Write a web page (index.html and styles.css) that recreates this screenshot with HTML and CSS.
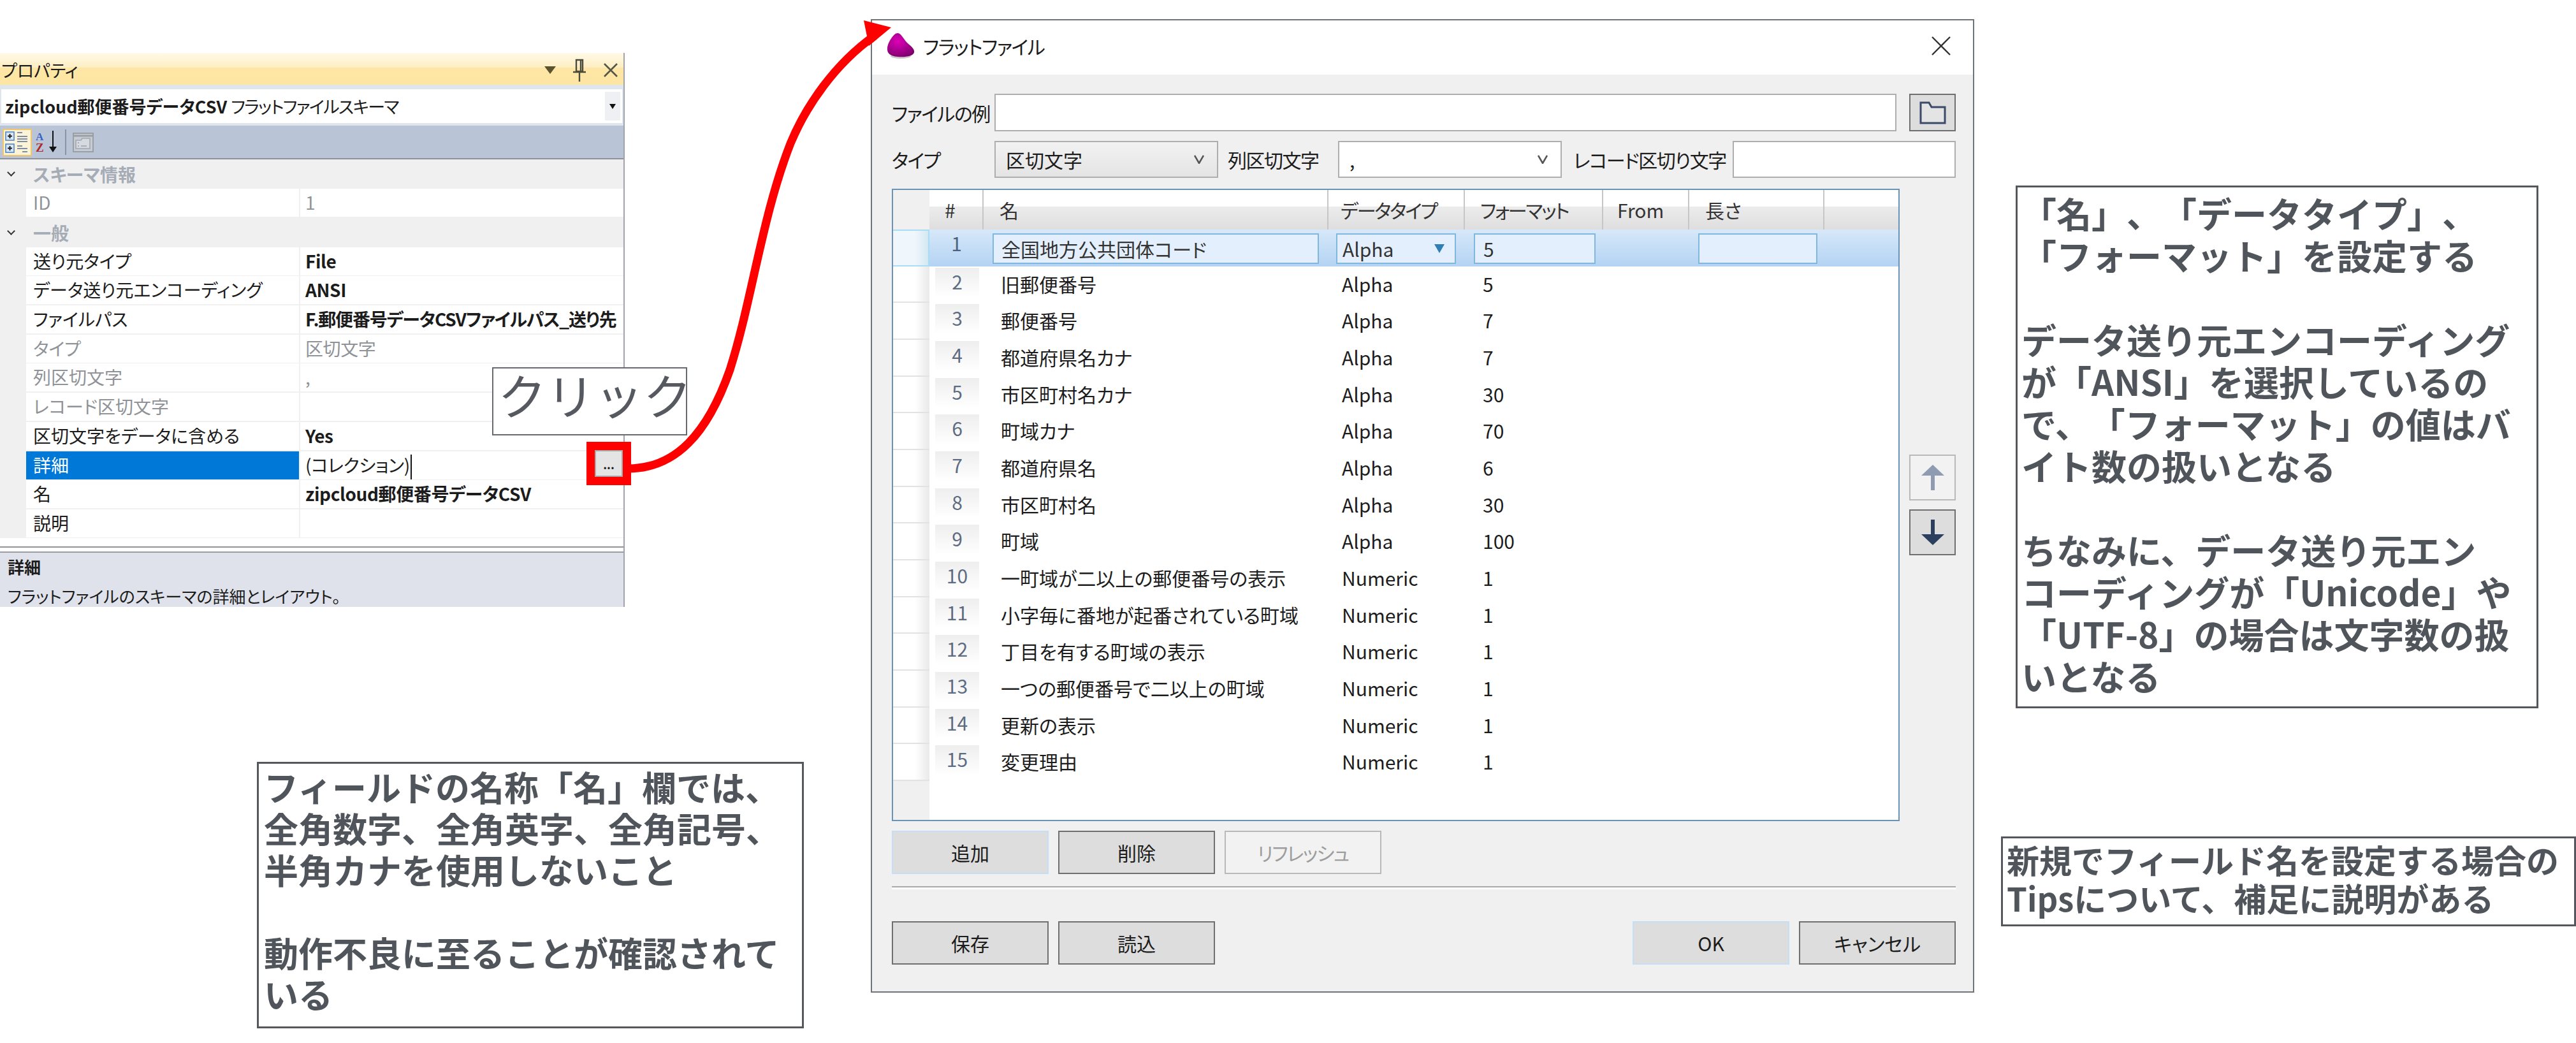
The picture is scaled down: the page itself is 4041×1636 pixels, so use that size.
FILE: index.html
```html
<!DOCTYPE html>
<html lang="ja">
<head>
  <meta charset="UTF-8">
  <title>フラットファイル</title>
  <link rel="stylesheet" href="styles.css">
</head>
<body>
  <div class="sheet">

    <!-- properties pane -->
    <section class="props">
      <div class="props-title">
        <span>プロパティ</span>
        <span class="props-tools">
          <svg width="18" height="12" viewBox="0 0 18 12"><path d="M0 0H18L9 12Z" fill="#5b5330"/></svg>
          <svg width="22" height="36" viewBox="0 0 22 36"><path d="M6 2H16V20H6ZM1 21H21M11 21V36M13 3V20" fill="none" stroke="#4b4b3c" stroke-width="2.4"/></svg>
          <svg width="24" height="24" viewBox="0 0 24 24"><path d="M2 2L22 22M22 2L2 22" stroke="#55564a" stroke-width="2.6"/></svg>
        </span>
      </div>
      <div class="props-combo">
        <div class="props-combo-box">
          <span><b>zipcloud郵便番号データCSV</b> <span class="combo-kind">フラットファイルスキーマ</span></span>
          <span class="props-combo-arrow"><svg width="10" height="8" viewBox="0 0 10 8"><path d="M0 0H10L5 8Z" fill="#111"/></svg></span>
        </div>
      </div>
      <div class="props-bar">
        <span class="bar-active">
          <svg width="40" height="38" viewBox="0 0 40 38">
            <rect x="2" y="3" width="13" height="13" fill="#dbe8fa" stroke="#4e86c8" stroke-width="1.6"/>
            <rect x="2" y="22" width="13" height="13" fill="#dbe8fa" stroke="#4e86c8" stroke-width="1.6"/>
            <path d="M5 9.5H12M8.5 6V13M5 28.5H12M8.5 25V32" stroke="#1c1c1c" stroke-width="2"/>
            <path d="M20 4H28M20 10H36M20 14H36M20 18H36M20 25H28M20 29H36M28 34H36" stroke="#7d8fa8" stroke-width="2"/>
          </svg>
        </span>
        <span class="bar-sort">
          <svg width="36" height="36" viewBox="0 0 36 36">
            <text x="0" y="15" class="sort-a">A</text>
            <text x="0" y="33" class="sort-z">Z</text>
            <path d="M27 0V30" stroke="#111" stroke-width="2"/>
            <path d="M21 25H33L27 34Z" fill="#111"/>
          </svg>
        </span>
        <span class="bar-sep"></span>
        <svg width="33" height="31" viewBox="0 0 33 31">
          <rect x="1" y="1" width="31" height="29" fill="#c6ccd4" stroke="#9a9fa6" stroke-width="2"/>
          <path d="M1 5H32" stroke="#9a9fa6" stroke-width="3"/>
          <path d="M5 12H13L15 9H27V25H5Z" fill="#d6dae0" stroke="#a2a7ae" stroke-width="1.6"/>
          <path d="M8 16H10M8 21H10M13 21H22" stroke="#9a9fa6" stroke-width="1.6"/>
        </svg>
      </div>
      <div class="props-grid">
        <div class="cat"><i></i>スキーマ情報</div>
        <div class="prow off"><span>ID</span><span>1</span></div>
        <div class="cat"><i></i>一般</div>
        <div class="prow"><span>送り元タイプ</span><b>File</b></div>
        <div class="prow"><span>データ送り元エンコーディング</span><b>ANSI</b></div>
        <div class="prow"><span>ファイルパス</span><b class="path-value">F.郵便番号データCSVファイルパス_送り先</b></div>
        <div class="prow off"><span>タイプ</span><span>区切文字</span></div>
        <div class="prow off"><span>列区切文字</span><span>,</span></div>
        <div class="prow off"><span>レコード区切文字</span><span></span></div>
        <div class="prow"><span>区切文字をデータに含める</span><b>Yes</b></div>
        <div class="prow selected"><span>詳細</span><span class="caret-cell">(コレクション)</span></div>
        <div class="prow"><span>名</span><b>zipcloud郵便番号データCSV</b></div>
        <div class="prow"><span>説明</span><span></span></div>
      </div>
      <div class="props-help">
        <b>詳細</b>
        <span>フラットファイルのスキーマの詳細とレイアウト。</span>
      </div>
    </section>

    <div class="click-note">クリック</div>
    <div class="ellipsis-mark"><span class="ellipsis-btn">...</span></div>

    <!-- flat file dialog -->
    <section class="dialog">
      <header class="dlg-head">
        <span class="dlg-title">
          <svg width="46" height="42" viewBox="0 0 46 42">
            <defs>
              <radialGradient id="drop" cx="0.4" cy="0.35" r="0.75">
                <stop offset="0" stop-color="#dd00b8"/>
                <stop offset="1" stop-color="#780068"/>
              </radialGradient>
            </defs>
            <ellipse cx="23" cy="37" rx="16" ry="4" fill="#c9c9c9"/>
            <path d="M18 1C23 1 27 9 32 15C38 21 45 25 44 31C43 37 31 39 18 38C6 37 1 32 2 24C3 15 12 1 18 1Z" fill="url(#drop)"/>
          </svg>
          フラットファイル
        </span>
        <svg class="dlg-close" width="30" height="30" viewBox="0 0 30 30"><path d="M1 1L29 29M29 1L1 29" stroke="#333" stroke-width="2.4"/></svg>
      </header>

      <div class="dlg-body">
        <div class="form-row file-row">
          <label class="lbl-first">ファイルの例</label>
          <div class="input grow"></div>
          <button class="btn folder-btn">
            <svg width="42" height="36" viewBox="0 0 42 36"><path d="M2 34V2H15L19 9H40V34Z" fill="#e4e4e4" stroke="#3a4a68" stroke-width="3"/></svg>
          </button>
        </div>
        <div class="form-row type-row">
          <label class="lbl-first">タイプ</label>
          <div class="combo gray">区切文字<svg width="16" height="14" viewBox="0 0 16 14"><path d="M1 1L8 13L15 1" fill="none" stroke="#555" stroke-width="2.6"/></svg></div>
          <label class="lbl-col">列区切文字</label>
          <div class="combo">,<svg width="16" height="14" viewBox="0 0 16 14"><path d="M1 1L8 13L15 1" fill="none" stroke="#555" stroke-width="2.6"/></svg></div>
          <label class="lbl-rec">レコード区切り文字</label>
          <div class="input grow"></div>
        </div>

        <div class="table-row">
          <div class="table">
            <div class="thead">
              <span class="th th-gutter"></span>
              <span class="th th-num">#</span>
              <span class="th th-name">名</span>
              <span class="th th-type">データタイプ</span>
              <span class="th th-format">フォーマット</span>
              <span class="th th-from">From</span>
              <span class="th th-len">長さ</span>
              <span class="th th-rest"></span>
            </div>
            <div class="tr current">
              <span class="rh"></span><span class="num">1</span>
              <span class="td name"><span class="edit">全国地方公共団体コード</span></span>
              <span class="td type"><span class="edit">Alpha<svg width="16" height="14" viewBox="0 0 16 14"><path d="M0 0H16L8 14Z" fill="#2f7fb4"/></svg></span></span>
              <span class="td format"><span class="edit">5</span></span>
              <span class="td"></span>
              <span class="td len"><span class="edit"></span></span>
            </div>
            <div class="tr"><span class="rh"></span><span class="num">2</span><span class="td name">旧郵便番号</span><span class="td type">Alpha</span><span class="td format">5</span></div>
            <div class="tr"><span class="rh"></span><span class="num">3</span><span class="td name">郵便番号</span><span class="td type">Alpha</span><span class="td format">7</span></div>
            <div class="tr"><span class="rh"></span><span class="num">4</span><span class="td name">都道府県名カナ</span><span class="td type">Alpha</span><span class="td format">7</span></div>
            <div class="tr"><span class="rh"></span><span class="num">5</span><span class="td name">市区町村名カナ</span><span class="td type">Alpha</span><span class="td format">30</span></div>
            <div class="tr"><span class="rh"></span><span class="num">6</span><span class="td name">町域カナ</span><span class="td type">Alpha</span><span class="td format">70</span></div>
            <div class="tr"><span class="rh"></span><span class="num">7</span><span class="td name">都道府県名</span><span class="td type">Alpha</span><span class="td format">6</span></div>
            <div class="tr"><span class="rh"></span><span class="num">8</span><span class="td name">市区町村名</span><span class="td type">Alpha</span><span class="td format">30</span></div>
            <div class="tr"><span class="rh"></span><span class="num">9</span><span class="td name">町域</span><span class="td type">Alpha</span><span class="td format">100</span></div>
            <div class="tr"><span class="rh"></span><span class="num">10</span><span class="td name">一町域が二以上の郵便番号の表示</span><span class="td type">Numeric</span><span class="td format">1</span></div>
            <div class="tr"><span class="rh"></span><span class="num">11</span><span class="td name">小字毎に番地が起番されている町域</span><span class="td type">Numeric</span><span class="td format">1</span></div>
            <div class="tr"><span class="rh"></span><span class="num">12</span><span class="td name">丁目を有する町域の表示</span><span class="td type">Numeric</span><span class="td format">1</span></div>
            <div class="tr"><span class="rh"></span><span class="num">13</span><span class="td name">一つの郵便番号で二以上の町域</span><span class="td type">Numeric</span><span class="td format">1</span></div>
            <div class="tr"><span class="rh"></span><span class="num">14</span><span class="td name">更新の表示</span><span class="td type">Numeric</span><span class="td format">1</span></div>
            <div class="tr"><span class="rh"></span><span class="num">15</span><span class="td name">変更理由</span><span class="td type">Numeric</span><span class="td format">1</span></div>
          </div>
          <div class="move-btns">
            <button class="btn move off">
              <svg width="36" height="40" viewBox="0 0 36 40"><path d="M18 0L36 17H0Z" fill="#8f9bb0"/><rect x="15" y="15" width="6" height="25" fill="#8f9bb0"/></svg>
            </button>
            <button class="btn move">
              <svg width="36" height="40" viewBox="0 0 36 40"><rect x="15" y="0" width="6" height="25" fill="#2d3f5e"/><path d="M18 40L36 23H0Z" fill="#2d3f5e"/></svg>
            </button>
          </div>
        </div>

        <div class="btn-row">
          <button class="btn wide focus">追加</button>
          <button class="btn wide">削除</button>
          <button class="btn wide off refresh">リフレッシュ</button>
        </div>
        <div class="rule"></div>
        <div class="btn-row last">
          <button class="btn wide">保存</button>
          <button class="btn wide">読込</button>
          <span class="grow"></span>
          <button class="btn wide focus">OK</button>
          <button class="btn wide">キャンセル</button>
        </div>
      </div>
    </section>

    <!-- annotations -->
    <div class="note note-left">フィールドの名称「名」欄では、<br>全角数字、全角英字、全角記号、<br>半角カナを使用しないこと<br><br>動作不良に至ることが確認されて<br>いる</div>
    <div class="note note-right">「名」、「データタイプ」、<br>「フォーマット」を設定する<br><br>データ送り元エンコーディング<br>が「ANSI」を選択しているの<br>で、「フォーマット」の値はバ<br>イト数の扱いとなる<br><br>ちなみに、データ送り元エン<br>コーディングが「Unicode」や<br>「UTF-8」の場合は文字数の扱<br>いとなる</div>
    <div class="note note-tips">新規でフィールド名を設定する場合の<br>Tipsについて、補足に説明がある</div>

    <svg class="arrow" width="4041" height="1636" viewBox="0 0 4041 1636">
      <path d="M985 735C1060 735 1110 680 1145 580C1180 470 1195 340 1240 225C1265 165 1310 100 1372 56" fill="none" stroke="#f00" stroke-width="13"/>
      <path d="M1398 43L1355 32L1363 72Z" fill="#f00"/>
    </svg>
  </div>
</body>
</html>
```

FILE: styles.css
```css
* {
  box-sizing: border-box;
}

body {
  margin: 0;
  background: #fff;
  color: #1c1c1c;
  font-family: "Noto Sans CJK JP", "Noto Sans", sans-serif;
  font-feature-settings: "palt";
}

.sheet {
  position: relative;
  width: 4041px;
  height: 1636px;
  overflow: hidden;
}

/* properties pane */
.props {
  position: absolute;
  left: 0;
  top: 83px;
  width: 980px;
  height: 869px;
  display: flex;
  flex-direction: column;
  border-right: 2px solid #a0a4aa;
  font-size: 28px;
  line-height: 34px;
  background: #fff;
}

.props > * {
  flex: none;
}

.props-title {
  height: 50px;
  padding: 4px 8px 0 2px;
  display: flex;
  justify-content: space-between;
  align-items: center;
  background: linear-gradient(#fff9e8, #fdeec2 45%, #fee7a6 46%, #fde5a2);
  font-size: 27px;
}

.props-tools {
  display: flex;
  align-items: center;
  gap: 26px;
}

.props-combo {
  height: 64px;
  padding: 7px 2px 4px;
  background: #e0e4ec;
}

.props-combo-box {
  height: 53px;
  display: flex;
  justify-content: space-between;
  background: #fff;
  align-items: center;
  padding-left: 6px;
  font-size: 27px;
}

.combo-kind {
  letter-spacing: -1.6px;
}

.props-combo-arrow {
  width: 24px;
  height: 45px;
  margin-right: 3px;
  background: #eef0f3;
  display: flex;
  align-items: center;
  justify-content: center;
}

.props-bar {
  height: 53px;
  padding: 3px 0 2px 4px;
  display: flex;
  align-items: center;
  background: #b9c5d6;
  border-bottom: 2px solid #8d9299;
}

.bar-active {
  width: 46px;
  height: 43px;
  background: #fdf3d6;
  border: 2px solid #f0c66e;
  display: flex;
  align-items: center;
  justify-content: center;
}

.bar-sort {
  margin-left: 6px;
  display: flex;
}

.sort-a {
  font: 700 17px "Liberation Serif", serif;
  fill: #3a62c4;
}

.sort-z {
  font: 700 19px "Liberation Serif", serif;
  fill: #b02828;
}

.bar-sep {
  width: 2px;
  height: 40px;
  margin: 0 10px 0 10px;
  background: #8a94a3;
}

.props-grid {
  height: 594px;
  background: #f0f0f0;
}

.cat {
  height: 46px;
  display: flex;
  align-items: center;
  padding-left: 13px;
  color: #a6acb6;
  font-weight: 700;
}

.cat i {
  width: 9px;
  height: 9px;
  margin: -5px 30px 0 0;
  border: solid #333;
  border-width: 0 2px 2px 0;
  transform: rotate(45deg);
}

.prow {
  height: 44px;
  margin: 0 0 1.7px 41px;
  display: grid;
  grid-template-columns: 428px 1fr;
  column-gap: 2px;
}

.prow > * {
  background: #fff;
  padding: 4px 0 0 11px;
  white-space: nowrap;
  overflow: hidden;
}

.prow > *:last-child {
  padding-left: 8px;
  letter-spacing: -0.4px;
}

.prow > .path-value {
  letter-spacing: -1.2px;
}

.prow.off {
  color: #8f9398;
}

.prow.selected > span:first-child {
  background: #0078d7;
  color: #fff;
}

.caret-cell {
  position: relative;
}

.caret-cell::after {
  content: "";
  display: inline-block;
  width: 2px;
  height: 40px;
  margin-left: 1px;
  vertical-align: middle;
  background: #111;
}

.props-help {
  height: 95px;
  margin-top: 13px;
  padding: 14px 12px 0;
  display: flex;
  flex-direction: column;
  gap: 14px;
  border-top: 2px solid #8f9399;
  background: linear-gradient(#fff 6px, #9a9da3 6px, #9a9da3 8px, #dfe2ea 8px);
  font-size: 26px;
  line-height: 32px;
}

.click-note {
  position: absolute;
  left: 772px;
  top: 576px;
  width: 306px;
  height: 107px;
  padding-left: 7px;
  background: #fff;
  border: 2px solid #666a70;
  color: #565a60;
  font-size: 76px;
  line-height: 80px;
  font-feature-settings: normal;
  white-space: nowrap;
}

.ellipsis-mark {
  position: absolute;
  left: 920px;
  top: 693px;
  width: 70px;
  height: 68px;
  border: 13px solid #f00;
  border-right-width: 13px;
  background: #f00;
  display: flex;
}

.ellipsis-btn {
  width: 44px;
  height: 42px;
  background: #e4e4e4;
  border: 2px solid #aaa;
  font-size: 18px;
  line-height: 40px;
  font-weight: 700;
  text-align: center;
}

/* flat file dialog */
.dialog {
  position: absolute;
  left: 1366px;
  top: 30px;
  width: 1731px;
  height: 1527px;
  display: flex;
  flex-direction: column;
  background: #f0f0f0;
  border: 2px solid #6f7479;
  font-size: 30px;
  line-height: 40px;
}

.dlg-head {
  height: 85px;
  padding: 0 35px 5px 22px;
  display: flex;
  justify-content: space-between;
  align-items: center;
  background: #fff;
}

.dlg-title {
  display: flex;
  align-items: center;
  gap: 12px;
  font-size: 30px;
  letter-spacing: -1.4px;
}

.dlg-body {
  flex: 1;
  padding: 30px 27px 0 31px;
  display: flex;
  flex-direction: column;
}

.form-row {
  display: flex;
  align-items: center;
}

.form-row label {
  white-space: nowrap;
  letter-spacing: -1.5px;
  flex: none;
}

.file-row {
  height: 59px;
}

.file-row .input {
  height: 59px;
}

.type-row {
  height: 58px;
  margin-top: 15px;
  gap: 15px;
}

.grow {
  flex: 1;
}

.lbl-first {
  width: 161px;
}

.type-row .lbl-first {
  width: 146px;
}

.lbl-col {
  width: 158px;
}

.lbl-rec {
  width: 238px;
  padding-left: 3px;
}

.input {
  height: 58px;
  background: #fff;
  border: 2px solid #aeaeae;
}

.combo {
  width: 351px;
  height: 58px;
  padding: 0 20px 0 16px;
  flex: none;
  display: flex;
  justify-content: space-between;
  align-items: center;
  background: #fff;
  border: 2px solid #aeaeae;
}

.combo.gray {
  background: linear-gradient(#f2f2f2, #e4e4e4);
}

.btn {
  padding: 0;
  font: inherit;
  color: #1c1c1c;
  background: #ddd;
  border: 2px solid #6f6f6f;
  font-feature-settings: "palt";
}

.btn.off {
  background: #f2f2f2;
  border-color: #b9b9b9;
  color: #9d9d9d;
}

.btn.focus {
  border-color: #c4def5;
}

.refresh {
  letter-spacing: -1.6px;
}

.folder-btn {
  width: 73px;
  height: 59px;
  margin-left: 20px;
  display: flex;
  align-items: center;
  justify-content: center;
}

.table-row {
  height: 992px;
  margin-top: 17px;
  display: flex;
  align-items: center;
  gap: 15px;
}

.table {
  width: 1581px;
  height: 992px;
  background: linear-gradient(to right, #f0f0f0 57px, #fff 57px);
  border: 2px solid #6b93b8;
}

.thead,
.tr {
  display: grid;
  grid-template-columns: 57px 85px 541px 214px 217px 135px 212px 116px;
}

.thead {
  height: 62px;
  color: #333;
}

.th {
  padding: 11px 0 0 22px;
  background: linear-gradient(#fff 26px, #ececec 26px, #dedede);
  border-right: 2px solid #c6c6c6;
  white-space: nowrap;
}

.th-gutter {
  background: #f0f0f0;
  border: 0;
}

.th-num {
  padding-left: 24px;
}

.th-name {
  padding-left: 25px;
}

.th-type {
  padding-left: 19px;
  letter-spacing: -2.2px;
}

.th-format {
  padding-left: 24px;
  letter-spacing: -2.2px;
}

.th-from {
  padding-left: 22px;
}

.th-len {
  padding-left: 25px;
}

.th-rest {
  border: 0;
}

.tr {
  height: 57.67px;
}

.rh {
  background: linear-gradient(to right, #fff 60%, #e9e9e9);
  border-bottom: 2px solid #e2e2e2;
}

.num {
  margin: 2px 7px 9px 9px;
  padding-top: 1px;
  background: linear-gradient(#eeeeee, #fff);
  color: #5d6c82;
  text-align: center;
}

.td {
  white-space: nowrap;
  padding-top: 7px;
}

.td.name {
  padding-left: 27px;
}

.td.type {
  padding-left: 21px;
}

.td.format {
  padding-left: 28px;
}

.tr.current {
  background: linear-gradient(#d7e8f9, #b3d3f3);
}

.tr.current .rh {
  background: linear-gradient(to right, #f0f7fc 60%, #d5e8f2);
  border: 2px solid #a9dcf5;
  border-left: 0;
}

.tr.current .num {
  background: none;
  margin: 0 7px;
  color: #4f627c;
}

.tr.current .td {
  padding: 6px 0 3px;
}

.edit {
  display: flex;
  justify-content: space-between;
  align-items: center;
  height: 48px;
  background: #e3effc;
  border: 2px solid #7fb8dc;
  color: #333;
}

.name .edit {
  margin: 0 15px 0 14px;
  padding-left: 12px;
}

.type .edit {
  margin: 0 14px 0 12px;
  padding: 0 16px 0 8px;
}

.format .edit {
  margin: 0 12px 0 14px;
  padding-left: 13px;
}

.len .edit {
  margin: 0 11px 0 14px;
}

.tr.current .td.name,
.tr.current .td.type,
.tr.current .td.format {
  padding-left: 0;
}

.move-btns {
  display: flex;
  flex-direction: column;
  gap: 14px;
}

.move {
  width: 73px;
  height: 72px;
  display: flex;
  align-items: center;
  justify-content: center;
}

.btn-row {
  margin-top: 15px;
  height: 68px;
  display: flex;
  gap: 15px;
}

.btn-row.last {
  margin-top: 50px;
}

.wide {
  width: 246px;
  height: 68px;
}

.rule {
  height: 5px;
  margin-top: 19px;
  border-top: 2px solid #a9a9a9;
  background: #fff;
  border-bottom: 0;
}

/* annotations */
.note {
  position: absolute;
  background: #fff;
  border: 3px solid #54585e;
  color: #50555b;
  font-weight: 700;
  white-space: nowrap;
  font-feature-settings: normal;
  text-spacing-trim: space-all;
}

.note-left {
  left: 403px;
  top: 1195px;
  width: 858px;
  height: 418px;
  padding: 3px 0 0 8px;
  font-size: 54px;
  line-height: 65px;
}

.note-right {
  left: 3162px;
  top: 291px;
  width: 820px;
  height: 820px;
  padding: 6px 0 0 6px;
  font-size: 55px;
  line-height: 66px;
}

.note-tips {
  left: 3139px;
  top: 1312px;
  width: 902px;
  height: 141px;
  padding: 3px 0 0 6px;
  font-size: 51px;
  line-height: 60px;
}

.arrow {
  position: absolute;
  left: 0;
  top: 0;
  pointer-events: none;
}
```
